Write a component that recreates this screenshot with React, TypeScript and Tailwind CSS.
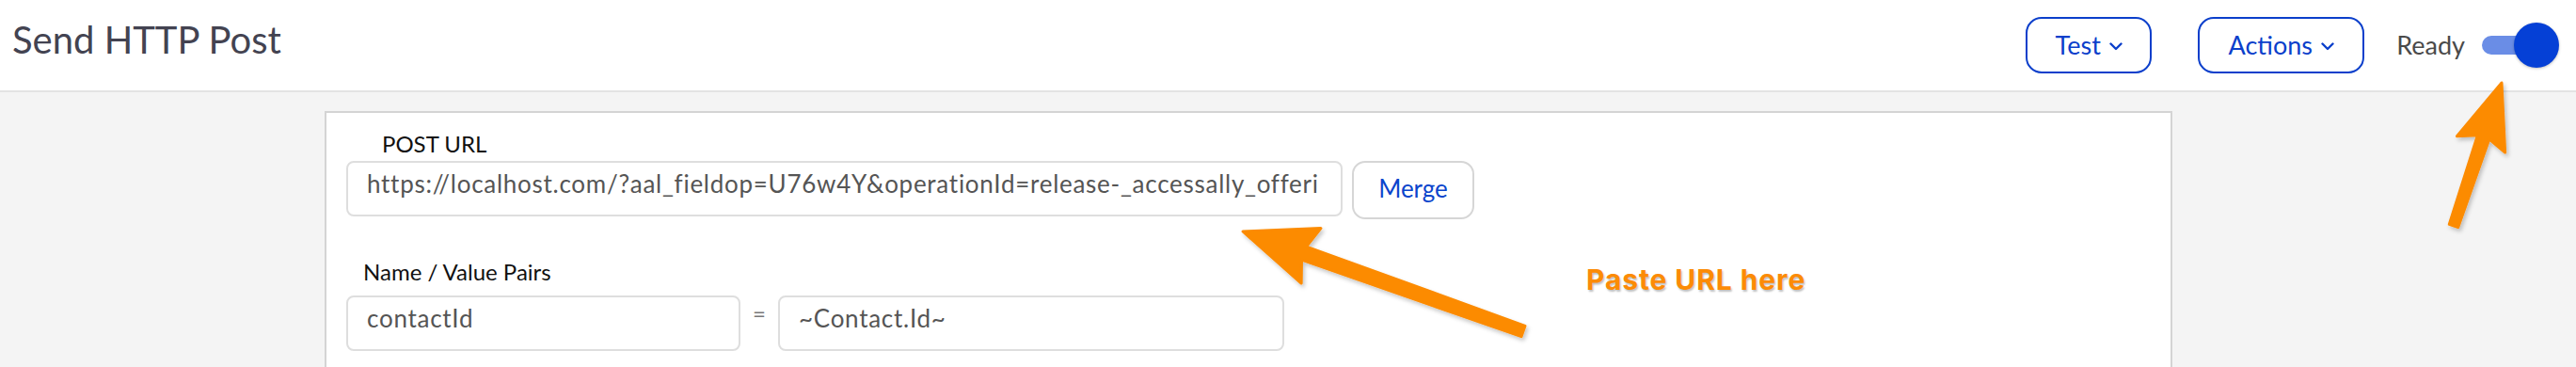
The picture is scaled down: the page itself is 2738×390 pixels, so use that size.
import type { ReactNode } from 'react';

type Point = { x: number; y: number };

interface ArrowProperties {
  tip: Point;
  tail: Point;
  headLength: number;
  headHalf: number;
  shaftHead: number;
  shaftTail: number;
}

// builds the polygon of an annotation arrow from tip to tail
const arrowPoints = ({ tip, tail, headLength, headHalf, shaftHead, shaftTail }: ArrowProperties) => {
  const dx = tail.x - tip.x;
  const dy = tail.y - tip.y;
  const length = Math.hypot(dx, dy);
  const ux = dx / length;
  const uy = dy / length;
  const px = -uy;
  const py = ux;
  const at = (along: number, side: number) =>
    `${tip.x + ux * along + px * side},${tip.y + uy * along + py * side}`;
  return [
    at(0, 0),
    at(headLength, headHalf),
    at(headLength - 8, shaftHead),
    at(length, shaftTail),
    at(length, -shaftTail),
    at(headLength - 8, -shaftHead),
    at(headLength, -headHalf),
  ].join(' ');
};

const Chevron = () => (
  <svg width="14" height="9" viewBox="0 0 14 9" fill="none" className="mt-[3px]">
    <polyline
      points="1.5,1.5 7,7 12.5,1.5"
      stroke="currentColor"
      strokeWidth="2.4"
      strokeLinecap="round"
      strokeLinejoin="round"
    />
  </svg>
);

const OutlineButton = ({ children, width }: { children: ReactNode; width: string }) => (
  <button
    className={`flex h-[60px] ${width} items-center justify-center gap-[9px] rounded-[17px] border-2 border-[#0b3fcb] bg-white text-[27px] text-[#0b3fcb]`}
  >
    {children}
    <Chevron />
  </button>
);

const TextField = ({ value, className }: { value: string; className: string }) => (
  <div
    className={`flex h-[59px] items-center rounded-[8px] border-2 border-[#dedede] bg-white pr-[14px] pb-[10px] pl-[20px] ${className}`}
  >
    <div className="min-w-0 flex-1 overflow-hidden text-[26px] tracking-[0.028em] whitespace-nowrap text-[#555]">
      {value}
    </div>
  </div>
);

export default function App() {
  // the field only shows the start of the long url
  const url = 'https://localhost.com/?aal_fieldop=U76w4Y&operationId=release-_accessally_offeri';

  return (
    <div className="relative flex h-[390px] flex-col overflow-hidden bg-[#f4f4f4] font-['Lato','Liberation_Sans',sans-serif]">
      <header className="flex h-[98px] shrink-0 items-start justify-between border-b-2 border-[#e3e3e3] bg-white">
        <h1 className="mt-[18px] pl-[13px] text-[40px] leading-[48px] font-normal text-[#434351]">
          Send HTTP Post
        </h1>
        <div className="mt-[18px] flex items-center pr-[18px]">
          <OutlineButton width="w-[134px]">Test</OutlineButton>
          <div className="w-[49px]" />
          <OutlineButton width="w-[177px]">Actions</OutlineButton>
          <span className="ml-[34px] text-[27px] text-[#4a4a4a]">Ready</span>
          <div className="relative ml-[18px] h-[48px] w-[82px]">
            <div className="absolute top-[14px] left-0 h-[20px] w-[64px] rounded-full bg-[#6a8de6]" />
            <div className="absolute top-0 right-0 h-[48px] w-[48px] rounded-full bg-[#0540d6] shadow-[0_1px_3px_rgba(0,0,0,0.25)]" />
          </div>
        </div>
      </header>

      <main className="flex flex-1 pt-[20px]">
        <section className="ml-[345px] flex w-[1964px] flex-col border-2 border-b-0 border-[#d4d4d4] bg-white pt-[18px] pl-[21px]">
          <label className="ml-[38px] text-[24px] leading-[29px] text-[#111]">POST URL</label>
          <div className="mt-[4px] flex items-start gap-[10px]">
            <TextField value={url} className="h-[58px] w-[1059px]" />
            <button className="h-[62px] w-[130px] rounded-[14px] border-2 border-[#d6d6d6] bg-white pb-[4px] text-[26px] text-[#0b45cc]">
              Merge
            </button>
          </div>

          <label className="mt-[41px] ml-[18px] text-[24px] leading-[29px] text-[#111]">
            Name / Value Pairs
          </label>
          <div className="mt-[11px] flex items-start">
            <TextField value="contactId" className="w-[419px]" />
            <span className="w-[40px] pt-[1px] pl-[13px] text-[24px] text-[#777]">=</span>
            <TextField value="~Contact.Id~" className="w-[538px]" />
          </div>
        </section>
      </main>

      <span className="absolute top-[282px] left-[1686px] font-['Inter',sans-serif] text-[30px] leading-[30px] font-bold tracking-[0.03em] text-[#fc8b06] [text-shadow:1px_2px_2px_rgba(0,0,0,0.25)]">
        Paste URL here
      </span>

      <svg className="pointer-events-none absolute inset-0" width="2738" height="390">
        <defs>
          <filter id="arrow-shadow" x="-20%" y="-20%" width="140%" height="140%">
            <feDropShadow dx="2" dy="3" stdDeviation="2" floodColor="#000" floodOpacity="0.22" />
          </filter>
        </defs>
        <polygon
          points={arrowPoints({
            tip: { x: 1321, y: 246 },
            tail: { x: 1619, y: 352 },
            headLength: 77,
            headHalf: 31,
            shaftHead: 7.5,
            shaftTail: 6,
          })}
          fill="#fc8b06"
          stroke="#fc8b06"
          strokeWidth="3"
          strokeLinejoin="round"
          filter="url(#arrow-shadow)"
        />
        <polygon
          points={arrowPoints({
            tip: { x: 2659, y: 88 },
            tail: { x: 2608, y: 240 },
            headLength: 69,
            headHalf: 27,
            shaftHead: 6.5,
            shaftTail: 5,
          })}
          fill="#fc8b06"
          stroke="#fc8b06"
          strokeWidth="3"
          strokeLinejoin="round"
          filter="url(#arrow-shadow)"
        />
      </svg>
    </div>
  );
}
